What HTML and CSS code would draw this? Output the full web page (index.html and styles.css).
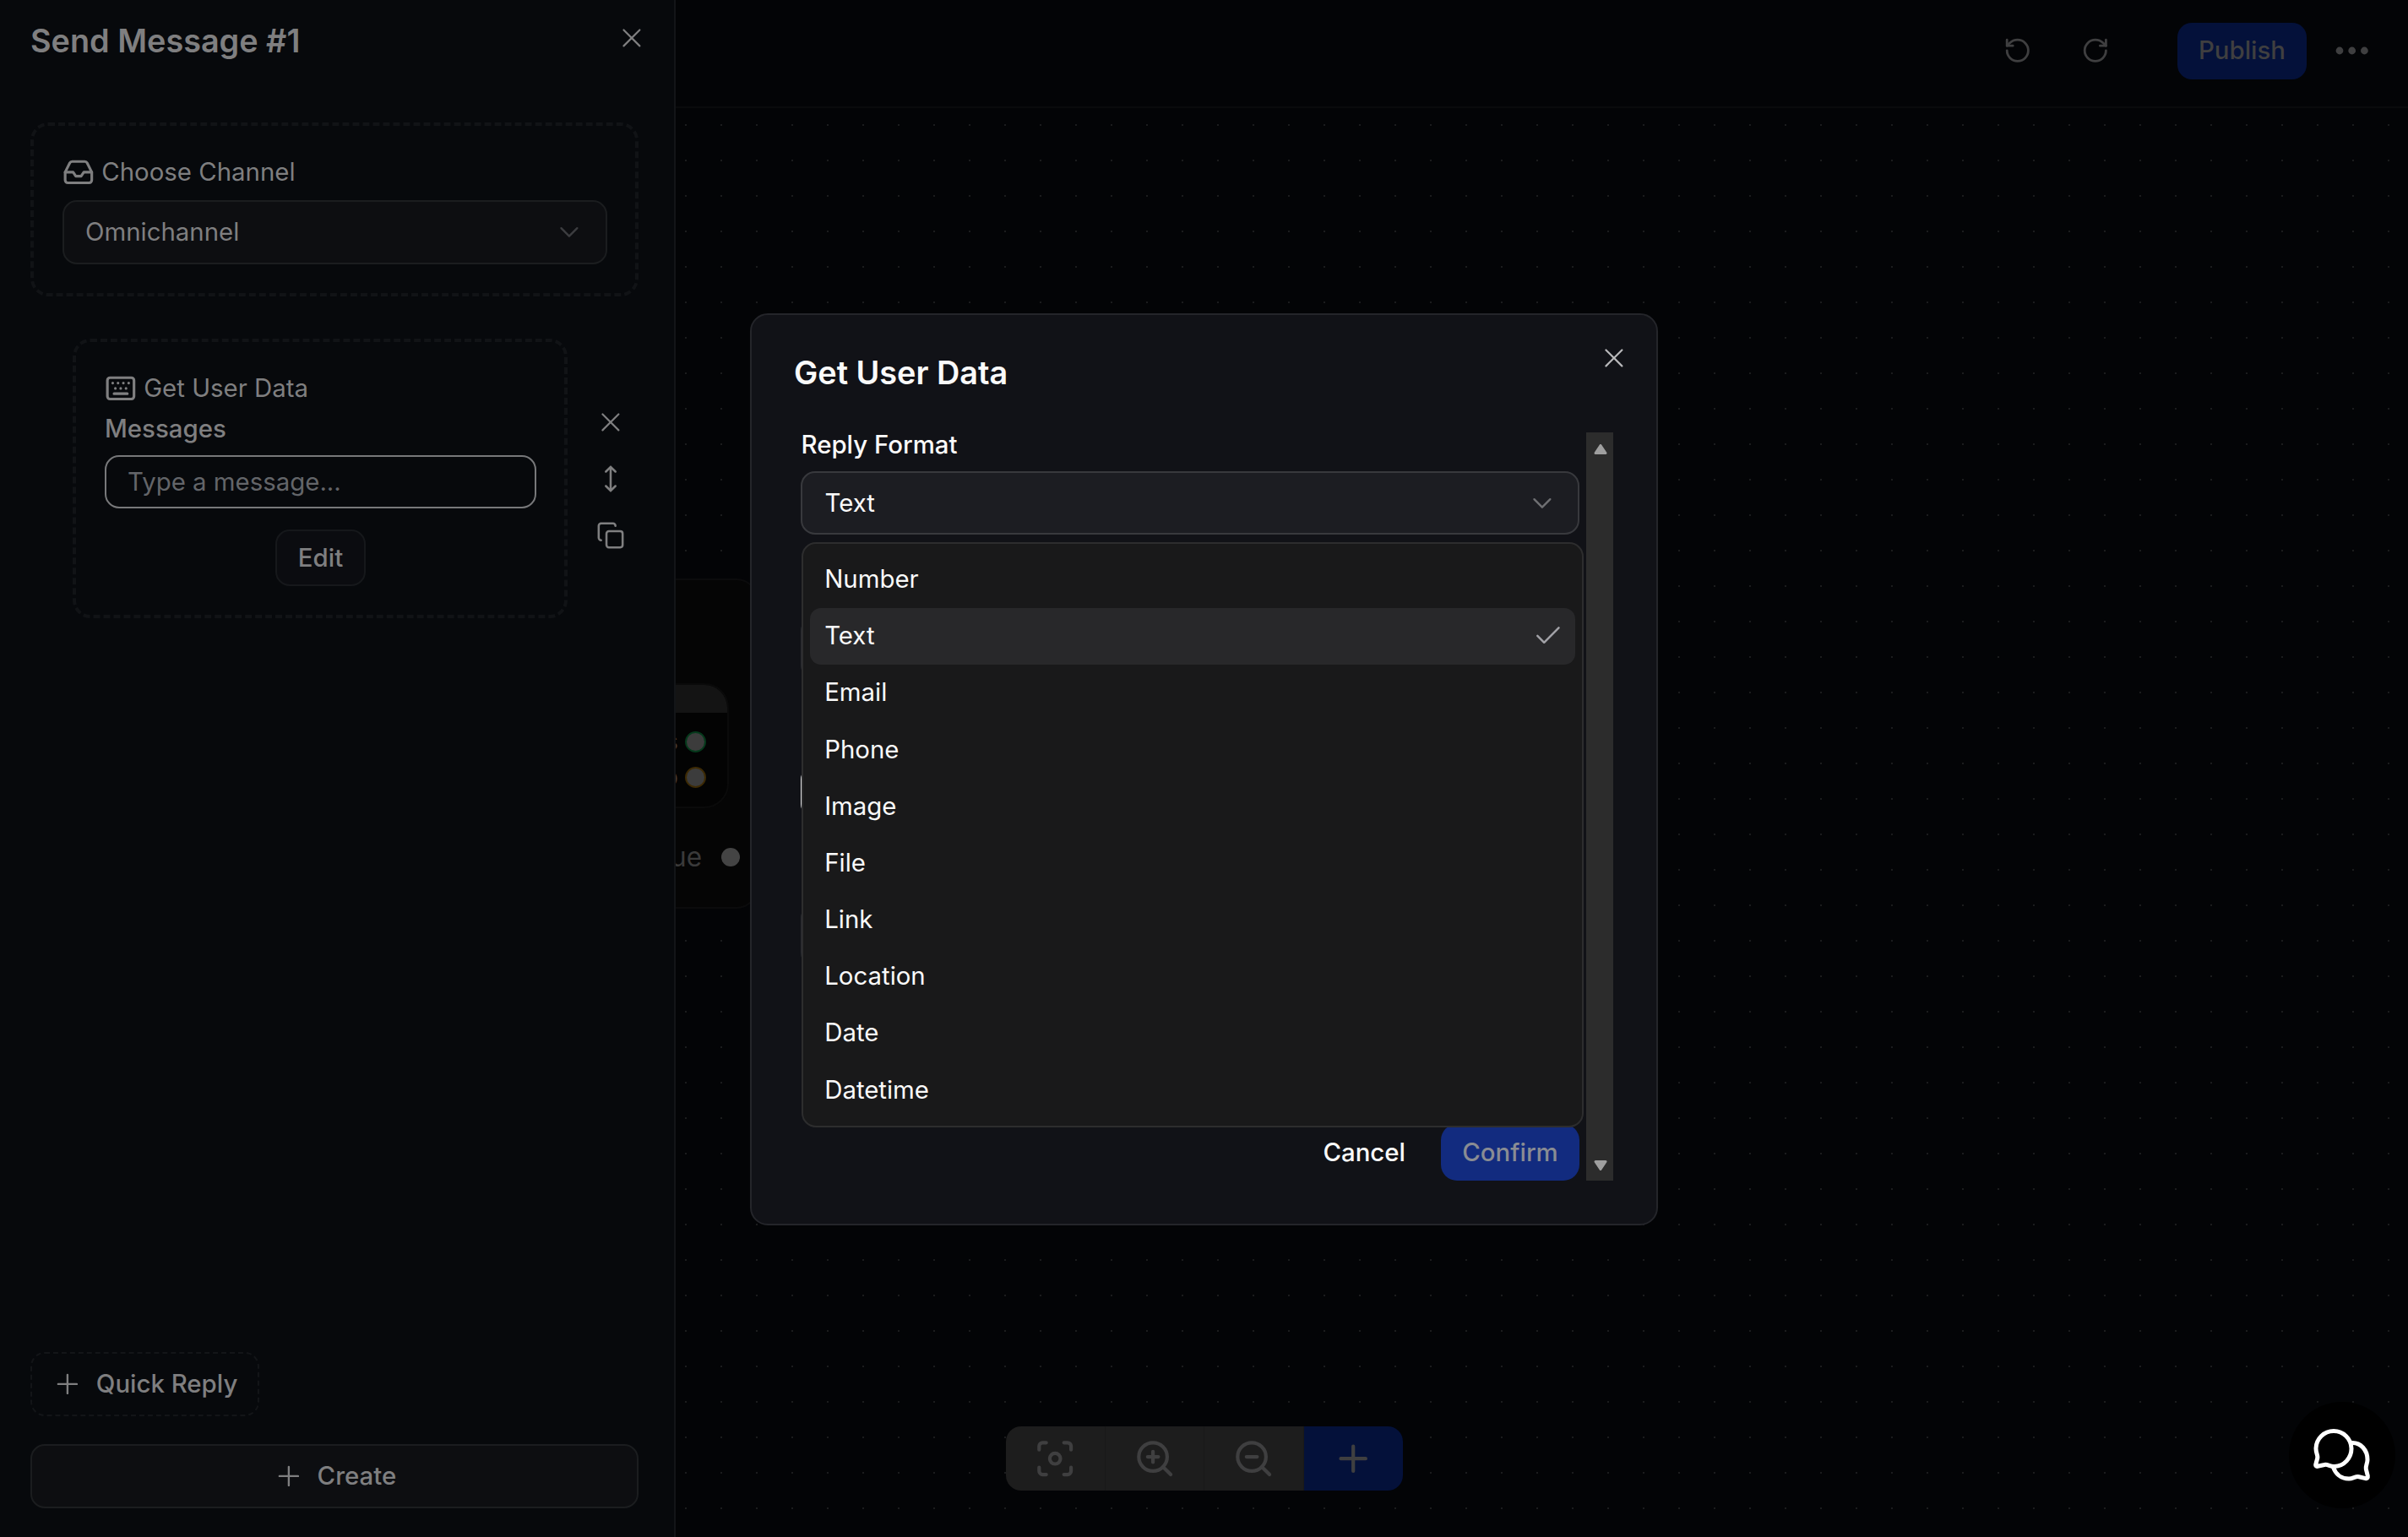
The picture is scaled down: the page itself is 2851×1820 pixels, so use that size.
FILE: index.html
```html
<!DOCTYPE html>
<html lang="en">
<head>
  <meta charset="UTF-8">
  <meta name="viewport" content="width=device-width, initial-scale=1.0">
  <title>Flow Builder</title>
  <link rel="stylesheet" href="styles.css">
</head>
<body>
  <div class="app">
    <aside class="sidebar">
      <div class="sidebar-header">
        <h1>Send Message #1</h1>
        <svg class="icon close-icon" viewBox="0 0 24 24"><path d="M18 6 6 18M6 6l12 12"/></svg>
      </div>

      <div class="dashed-box">
        <div class="box-label">
          <svg class="icon label-icon" viewBox="0 0 24 24"><path d="M22 12h-6l-2 3h-4l-2-3H2"/><path d="M5.45 5.11 2 12v6a2 2 0 0 0 2 2h16a2 2 0 0 0 2-2v-6l-3.45-6.89A2 2 0 0 0 16.76 4H7.24a2 2 0 0 0-1.79 1.11z"/></svg>
          <span>Choose Channel</span>
        </div>
        <div class="select channel-select">
          <span>Omnichannel</span>
          <svg class="icon chevron" viewBox="0 0 24 24"><path d="m6 9 6 6 6-6"/></svg>
        </div>
      </div>

      <div class="block-row">
        <div class="dashed-box block-card">
          <div class="box-label">
            <svg class="icon label-icon" viewBox="0 0 24 24"><rect x="2" y="4" width="20" height="16" rx="2"/><path d="M6 8h.01M10 8h.01M14 8h.01M18 8h.01M8 12h.01M12 12h.01M16 12h.01M7 16h10"/></svg>
            <span>Get User Data</span>
          </div>
          <div class="field-label">Messages</div>
          <input class="message-input" type="text" placeholder="Type a message...">
          <button class="edit-btn">Edit</button>
        </div>
        <div class="block-actions">
          <div class="action"><svg class="icon close-icon" viewBox="0 0 24 24"><path d="M18 6 6 18M6 6l12 12"/></svg></div>
          <div class="action"><svg class="icon move-icon" viewBox="0 0 24 24"><path d="M12 2v20M8 6l4-4 4 4M8 18l4 4 4-4"/></svg></div>
          <div class="action"><svg class="icon copy-icon" viewBox="0 0 24 24"><rect x="8.5" y="8.5" width="13.5" height="13.5" rx="2"/><path d="M4 16c-1.1 0-2-.9-2-2V4c0-1.1.9-2 2-2h10c1.1 0 2 .9 2 2"/></svg></div>
        </div>
      </div>

      <div class="sidebar-footer">
        <button class="quick-btn">
          <svg class="icon plus-icon" viewBox="0 0 24 24"><path d="M5 12h14M12 5v14"/></svg>
          Quick Reply
        </button>
        <button class="create-btn">
          <svg class="icon plus-icon" viewBox="0 0 24 24"><path d="M5 12h14M12 5v14"/></svg>
          Create
        </button>
      </div>
    </aside>

    <main class="workspace">
      <header class="topbar">
        <svg class="icon history-icon" viewBox="0 0 24 24"><path d="M3 12a9 9 0 1 0 9-9 9.75 9.75 0 0 0-6.74 2.74L3 8"/><path d="M3 3v5h5"/></svg>
        <svg class="icon history-icon redo" viewBox="0 0 24 24"><path d="M21 12a9 9 0 1 1-9-9c2.52 0 4.93 1 6.74 2.74L21 8"/><path d="M21 3v5h-5"/></svg>
        <button class="publish-btn">Publish</button>
        <svg class="more-icon" viewBox="0 0 40 10"><circle cx="5" cy="5" r="4.4"/><circle cx="19.7" cy="5" r="4.4"/><circle cx="34.4" cy="5" r="4.4"/></svg>
      </header>

      <div class="canvas">
        <svg class="dots">
          <pattern id="grid" x="0" y="0" width="42" height="42" patternUnits="userSpaceOnUse">
            <rect x="11" y="19" width="2" height="2"/>
          </pattern>
          <rect class="dots-fill" width="100%" height="100%" fill="url(#grid)"/>
        </svg>
        <div class="node">
          <div class="node-block">
            <div class="node-block-head"></div>
            <div class="node-out success">Success<i></i></div>
            <div class="node-out skip">Skip<i></i></div>
          </div>
          <div class="node-continue">Continue<i></i></div>
        </div>
      </div>
    </main>
  </div>

  <div class="toolbar">
    <div class="tool"><svg class="icon" viewBox="0 0 24 24"><circle cx="12" cy="12" r="3"/><path d="M3 7V5a2 2 0 0 1 2-2h2M17 3h2a2 2 0 0 1 2 2v2M21 17v2a2 2 0 0 1-2 2h-2M7 21H5a2 2 0 0 1-2-2v-2"/></svg></div>
    <div class="tool"><svg class="icon" viewBox="0 0 24 24"><circle cx="11" cy="11" r="8"/><path d="m21 21-4.35-4.35M11 8v6M8 11h6"/></svg></div>
    <div class="tool"><svg class="icon" viewBox="0 0 24 24"><circle cx="11" cy="11" r="8"/><path d="m21 21-4.35-4.35M8 11h6"/></svg></div>
    <div class="tool add"><svg class="icon" viewBox="0 0 24 24"><path d="M5 12h14M12 5v14"/></svg></div>
  </div>

  <div class="modal">
    <svg class="icon modal-close" viewBox="0 0 24 24"><path d="M18 6 6 18M6 6l12 12"/></svg>
    <h2>Get User Data</h2>
    <div class="modal-scroll">
      <div class="modal-body">
        <div class="reply-label">Reply Format</div>
        <div class="select-wrap">
          <div class="select reply-select">
            <span>Text</span>
            <svg class="icon chevron" viewBox="0 0 24 24"><path d="m6 9 6 6 6-6"/></svg>
          </div>
          <ul class="options">
            <li>Number</li>
            <li class="selected">Text<svg class="icon check-icon" viewBox="0 0 24 24"><path d="M20 6 9 17l-5-5"/></svg></li>
            <li>Email</li>
            <li>Phone</li>
            <li>Image</li>
            <li>File</li>
            <li>Link</li>
            <li>Location</li>
            <li>Date</li>
            <li>Datetime</li>
          </ul>
        </div>
        <div class="hidden-field"></div>
        <div class="hidden-field bright"></div>
        <div class="hidden-field"></div>
        <div class="modal-footer">
          <button class="cancel-btn">Cancel</button>
          <button class="confirm-btn">Confirm</button>
        </div>
      </div>
      <div class="scrollbar">
        <svg viewBox="0 0 16 12"><path d="M8 1.5 14 10.5H2z"/></svg>
        <svg viewBox="0 0 16 12"><path d="M8 10.5 14 1.5H2z"/></svg>
      </div>
    </div>
  </div>

  <div class="chat-btn">
    <svg viewBox="0 0 68 64">
      <path d="M3 24A21 21 0 1 1 25 45.500C20 46 17 42.500 13 43.500L5 45.300C3.300 45.700 2.400 44.500 2.800 43L4.800 35.500C5.500 32.500 3 30 3 24Z"/>
      <path d="M45.500 17.500C56 17 64 26 64 37.500C64 42 61.500 45 62.300 48.500L64.300 56.500C64.700 59 63.500 60 61.800 59.600L54 57.700C50 56.700 47 60 42 60C32 60 26 53.500 23.500 46.500"/>
    </svg>
  </div>
</body>
</html>
```
FILE: styles.css
```css
* {
  box-sizing: border-box;
}
body {
  margin: 0;
  height: 100vh;
  overflow: hidden;
  background: #030406;
  color: #7f7f80;
  font-family: Inter, sans-serif;
  font-size: 29.4px;
  line-height: 42px;
}
h1, h2, ul {
  margin: 0;
  padding: 0;
}
button, input {
  font: inherit;
  color: inherit;
  margin: 0;
}
button {
  font-weight: 500;
}
.icon {
  display: block;
  flex: none;
  fill: none;
  stroke: currentColor;
  stroke-width: 2;
  stroke-linecap: round;
  stroke-linejoin: round;
}
.app {
  display: flex;
  height: 100%;
}

/* sidebar */
.sidebar {
  display: flex;
  flex-direction: column;
  flex: none;
  width: 800px;
  padding: 0 42px 34px 36px;
  background: #07090c;
  border-right: 2px solid #131518;
}
.sidebar-header {
  display: flex;
  justify-content: space-between;
  height: 145px;
  padding-top: 24px;
}
.sidebar-header h1 {
  font-size: 37.8px;
  font-weight: 600;
  line-height: 48px;
}
.close-icon {
  width: 37.8px;
  height: 37.8px;
  stroke-width: 1.4;
}
.sidebar-header .close-icon {
  margin: 2px -11px 0 0;
}
.dashed-box {
  display: flex;
  flex-direction: column;
  padding: 34px 33px 34px 34px;
  border: 4px dashed #111316;
  border-radius: 21px;
}
.box-label {
  display: flex;
  align-items: center;
  gap: 8.4px;
}
.label-icon {
  width: 37.8px;
  height: 37.8px;
}
.select {
  display: flex;
  align-items: center;
  justify-content: space-between;
  height: 76px;
  padding: 0 24px 0 25px;
  border: 2px solid #1b1d1f;
  border-radius: 17px;
}
.channel-select {
  margin-top: 12px;
  background: #0d0e11;
}
.chevron {
  width: 37.8px;
  height: 37.8px;
  stroke-width: 1.5;
  color: #3c3d40;
}
.block-row {
  display: flex;
  align-items: center;
  gap: 17px;
  margin: 50px 0 0 50px;
}
.block-card {
  width: 586px;
  flex: none;
}
.field-label {
  margin-top: 6px;
  font-weight: 500;
}
.message-input {
  width: 100%;
  height: 63px;
  margin-top: 10px;
  padding: 0 25px;
  background: transparent;
  border: 2px solid #77787a;
  border-radius: 17px;
}
.message-input::placeholder {
  color: #636569;
}
.edit-btn {
  align-self: center;
  width: 107px;
  height: 67px;
  margin-top: 25px;
  padding: 0;
  background: #0b0c10;
  border: 2px solid #16181b;
  border-radius: 17px;
}
.action {
  display: flex;
  align-items: center;
  justify-content: center;
  width: 67px;
  height: 67px;
}
.move-icon {
  width: 34px;
  height: 34px;
  stroke-width: 1.8;
}
.copy-icon {
  width: 34px;
  height: 34px;
  stroke-width: 1.8;
}
.sidebar-footer {
  margin-top: auto;
}
.quick-btn, .create-btn {
  display: flex;
  align-items: center;
  gap: 15px;
  height: 76px;
  border-radius: 17px;
}
.quick-btn {
  padding: 0 24px 0 23px;
  background: transparent;
  border: 2px dashed #131518;
}
.create-btn {
  justify-content: center;
  width: 100%;
  margin-top: 33px;
  background: #0d0e11;
  border: 2px solid #1b1d1f;
}
.plus-icon {
  width: 37.8px;
  height: 37.8px;
  stroke-width: 1.5;
}

/* workspace */
.workspace {
  display: flex;
  flex-direction: column;
  flex: 1;
  overflow: hidden;
}
.topbar {
  display: flex;
  align-items: center;
  justify-content: flex-end;
  height: 128px;
  padding: 0 46px 6px 0;
  border-bottom: 2px solid #0a0b0c;
  color: #3f3f40;
}
.history-icon {
  width: 33.6px;
  height: 33.6px;
}
.redo {
  margin: 0 80px 0 58.5px;
}
.publish-btn {
  width: 153px;
  height: 67px;
  margin-right: 34px;
  padding: 0;
  background: #04113a;
  border: 0;
  border-radius: 17px;
}
.more-icon {
  width: 40px;
  height: 10px;
  fill: currentColor;
}
.canvas {
  position: relative;
  flex: 1;
}
.dots {
  display: block;
  width: 100%;
  height: 100%;
  fill: #1b1c1d;
}
.node {
  position: absolute;
  top: 557px;
  left: -560px;
  width: 657px;
  height: 391px;
  padding: 122px 32px 0 30px;
  background: #050505;
  border: 2px solid #0b0b0c;
  border-radius: 25px;
}
.node-block {
  height: 148px;
  overflow: hidden;
  background: #030303;
  border: 2px solid #0a0a0a;
  border-radius: 29px;
}
.node-block-head {
  height: 33px;
  background: #141414;
}
.node-out, .node-continue {
  display: flex;
  align-items: center;
  justify-content: flex-end;
}
.node-out {
  gap: 8px;
  padding-right: 25px;
  color: #433a33;
}
.node-out.success {
  margin-top: 13px;
}
.node i {
  width: 25px;
  height: 25px;
  background: #3c3c3c;
  border-radius: 50%;
}
.success i {
  border: 2px solid #05391b;
}
.skip i {
  border: 2px solid #3d2a04;
}
.node-continue {
  gap: 23px;
  margin: 37px -13px 0 0;
  font-size: 31.5px;
  color: #3a3a3a;
}
.node-continue i {
  width: 22px;
  height: 22px;
  background: #444444;
}
.toolbar {
  position: fixed;
  left: 1191px;
  bottom: 55px;
  display: flex;
  overflow: hidden;
  border-radius: 18px;
  color: #3f3f40;
}
.tool {
  display: flex;
  align-items: center;
  justify-content: center;
  width: 117.5px;
  height: 76px;
  background: #1d1d1d;
  border-right: 1px solid #191919;
}
.tool .icon {
  width: 50.4px;
  height: 50.4px;
}
.tool.add {
  background: #04113a;
  border-right: 0;
}

/* modal */
.modal {
  position: fixed;
  top: 371px;
  left: 888px;
  width: 1075px;
  height: 1080px;
  padding: 47px 51px 51px 50px;
  background: #111217;
  border: 2px solid #24252a;
  border-radius: 21px;
  color: #fafafa;
}
.modal h2 {
  height: 92px;
  font-size: 37.8px;
  font-weight: 600;
  line-height: 42px;
}
.modal-close {
  position: absolute;
  top: 32px;
  right: 31px;
  width: 37.8px;
  height: 37.8px;
  stroke-width: 1.4;
  color: #b8b8ba;
}
.modal-scroll {
  display: flex;
  height: 886px;
}
.modal-body {
  display: flex;
  flex-direction: column;
  flex: 1;
  padding: 0 8px;
}
.reply-label {
  height: 46px;
  padding-left: 0.5px;
  font-weight: 500;
  line-height: 29.4px;
}
.select-wrap {
  position: relative;
}
.reply-select {
  height: 75px;
  padding-right: 23px;
  padding-left: 26.5px;
  background: #1c1d22;
  border-color: #38393d;
}
.reply-select .chevron {
  color: #6f7073;
}
.options {
  position: absolute;
  z-index: 2;
  top: 84px;
  left: 1px;
  width: 926px;
  padding: 8.4px;
  background: #19191a;
  border: 2px solid #2d2d2e;
  border-radius: 17px;
  list-style: none;
}
.options li {
  display: flex;
  align-items: center;
  justify-content: space-between;
  height: 67.2px;
  padding: 0 13px 0 16.8px;
  border-radius: 13px;
}
.options .selected {
  background: #28282a;
}
.check-icon {
  width: 37.8px;
  height: 37.8px;
  stroke-width: 1.6;
  color: #a1a1a6;
}
.hidden-field {
  height: 75px;
  margin-top: 97px;
  border: 2px solid #2a2b30;
  border-radius: 17px;
}
.hidden-field + .hidden-field {
  margin-top: 101px;
}
.hidden-field.bright {
  height: 63px;
  border-color: #e4e4e6;
}
.modal-footer {
  display: flex;
  justify-content: flex-end;
  align-items: center;
  margin-top: auto;
}
.modal-footer button {
  height: 67px;
  padding: 0;
  border: 0;
}
.cancel-btn {
  margin-right: 42px;
  background: transparent;
}
.confirm-btn {
  width: 164px;
  background: #122b7f;
  border-radius: 19px;
}
.modal-footer .confirm-btn {
  color: #898c93;
}
.scrollbar {
  display: flex;
  flex-direction: column;
  justify-content: space-between;
  align-items: center;
  width: 32px;
  padding: 14px 0 12px;
  background: #2c2c2c;
}
.scrollbar svg {
  width: 16px;
  height: 12px;
  margin-left: 1px;
  fill: #9f9f9f;
  stroke: #9f9f9f;
  stroke-width: 3;
  stroke-linejoin: round;
}

/* chat launcher */
.chat-btn {
  position: fixed;
  right: 15px;
  bottom: 34px;
  display: flex;
  align-items: center;
  justify-content: center;
  width: 126px;
  height: 126px;
  background: #000000;
  border-radius: 50%;
}
.chat-btn svg {
  width: 68px;
  height: 64px;
  fill: none;
  stroke: #ffffff;
  stroke-width: 5;
  stroke-linecap: round;
  stroke-linejoin: round;
}
```
